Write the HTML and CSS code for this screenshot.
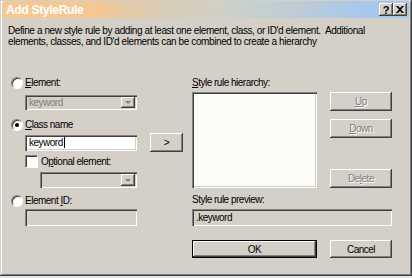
FILE: index.html
```html
<!DOCTYPE html>
<html lang="en">
<head>
    <meta charset="UTF-8">
    <title>Add StyleRule</title>
    <link rel="stylesheet" href="styles.css">
</head>
<body>

    <div class="window">
        <div class="titlebar">
            <span class="title">Add StyleRule</span>
            <div class="tb-btns">
                <span class="tb-btn">?</span>
                <span class="tb-btn">
                    <svg width="8" height="7" viewBox="0 0 8 7"><path d="M0 0h2l2 2 2-2h2L5 3.5 8 7H6L4 5 2 7H0l3-3.5z" fill="#000"/></svg>
                </span>
            </div>
        </div>

        <p class="intro">Define a new style rule by adding at least one element, class, or ID'd element.&nbsp; Additional elements, classes, and ID'd elements can be combined to create a hierarchy</p>

        <div class="main">
            <!-- 왼쪽: 선택자 입력 -->
            <div class="left">
                <div class="opt-row">
                    <span class="radio"></span>
                    <label><u>E</u>lement:</label>
                </div>
                <div class="select disabled select-el">
                    <span class="select-text">keyword</span>
                    <span class="drop"><i class="arrow"></i></span>
                </div>

                <div class="opt-row row-class">
                    <span class="radio checked"></span>
                    <label><u>C</u>lass name</label>
                </div>
                <div class="field field-class">keyword<span class="caret"></span></div>

                <div class="check-row">
                    <span class="checkbox"></span>
                    <label>O<u>p</u>tional element:</label>
                </div>
                <div class="select disabled select-opt">
                    <span class="select-text"></span>
                    <span class="drop"><i class="arrow"></i></span>
                </div>

                <div class="opt-row row-id">
                    <span class="radio"></span>
                    <label>Element <u>I</u>D:</label>
                </div>
                <div class="field disabled field-id"></div>
            </div>

            <div class="mid">
                <button class="btn btn-add">&gt;</button>
            </div>

            <!-- 오른쪽: 계층 / 미리보기 -->
            <div class="right">
                <label class="lbl-hier"><u>S</u>tyle rule hierarchy:</label>
                <div></div>
                <div class="listbox"></div>
                <div class="side-btns">
                    <button class="btn disabled"><u>U</u>p</button>
                    <button class="btn disabled btn-down"><u>D</u>own</button>
                    <button class="btn disabled btn-del">De<u>l</u>ete</button>
                </div>
                <label class="lbl-preview">Style rule preview:</label>
                <div></div>
                <div class="field disabled preview">.keyword</div>
                <button class="btn btn-default btn-ok">OK</button>
                <button class="btn btn-ok">Cancel</button>
            </div>
        </div>
    </div>

</body>
</html>
```

FILE: styles.css
```css
body {
    margin: 0;
    background: #e4e4e4;
    font-family: "Liberation Sans", Arial, sans-serif;
    font-size: 10px;
    letter-spacing: -0.5px;
    color: #000;
}
.window {
    width: 412px;
    height: 276px;
    box-sizing: border-box;
    background: #d4d0c8;
    padding: 1px 3px 0 3px;
    box-shadow: inset -1px -1px #404040, inset 1px 1px #d4d0c8,
                inset -2px -2px #808080, inset 2px 2px #fff;
}
.titlebar {
    height: 17px;
    display: flex;
    align-items: center;
    justify-content: space-between;
    padding: 0 2px 0 3px;
    background: linear-gradient(to right, #f6c892 0%, #f2c894 24%, #e4c9a6 30%,
                #d6cdb8 42%, #d2d0c4 52%, #c6d0cc 60%, #bccbd8 74%, #a8c8ec 88%, #a6c8f0 100%);
}
.title {
    color: #fff;
    font-weight: bold;
    font-size: 12px;
    letter-spacing: -0.3px;
}
.tb-btns {
    display: flex;
}
.tb-btn {
    width: 14px;
    height: 13px;
    display: flex;
    align-items: center;
    justify-content: center;
    background: #d4d0c8;
    font-weight: bold;
    font-size: 11px;
    letter-spacing: 0;
    box-shadow: inset -1px -1px #404040, inset 1px 1px #fff, inset -2px -2px #808080;
}
.intro {
    margin: 7px 0 0 5px;
    width: 390px;
    line-height: 11px;
    letter-spacing: -0.4px;
}
.main {
    display: flex;
    margin-top: 30px;
    padding-left: 8px;
}
label {
    display: block;
    line-height: 12px;
}

/* 왼쪽 영역 */
.left {
    width: 126px;
    display: flex;
    flex-direction: column;
}
.opt-row, .check-row {
    display: flex;
    align-items: center;
    gap: 2px;
    height: 12px;
}
.radio {
    width: 10px;
    height: 10px;
    border-radius: 50%;
    background: #fff;
    border: 1px solid;
    border-color: #808080 #fff #fff #808080;
    box-shadow: inset 1px 1px #404040;
    position: relative;
}
.radio.checked::after {
    content: "";
    position: absolute;
    left: 3px;
    top: 3px;
    width: 4px;
    height: 4px;
    border-radius: 50%;
    background: #000;
}
.row-class { margin-top: 9px; }
.row-id { margin-top: 7px; }
.check-row {
    margin: 4px 0 0 14px;
    height: 13px;
    gap: 3px;
}
.checkbox {
    width: 11px;
    height: 11px;
    background: #fff;
    border: 1px solid;
    border-color: #808080 #fff #fff #808080;
    box-shadow: inset 1px 1px #404040;
}
.select, .field {
    box-sizing: border-box;
    box-shadow: inset 1px 1px #808080, inset 2px 2px #404040,
                inset -1px -1px #fff, inset -2px -2px #d4d0c8;
    background: #fff;
}
.select {
    display: flex;
    align-items: center;
    justify-content: space-between;
    height: 15px;
    padding: 2px;
    margin-left: 14px;
}
.select.disabled, .field.disabled {
    background: #d4d0c8;
}
.select-el { margin-top: 6px; }
.select-opt { margin: 4px 0 0 29px; height: 16px; }
.select-text {
    color: #808080;
    padding-left: 2px;
}
.drop {
    width: 14px;
    height: 100%;
    display: flex;
    align-items: center;
    justify-content: center;
    background: #d4d0c8;
    box-shadow: inset -1px -1px #404040, inset 1px 1px #fff, inset -2px -2px #808080;
}
.arrow {
    width: 0;
    height: 0;
    border-left: 3px solid transparent;
    border-right: 3px solid transparent;
    border-top: 3px solid #808080;
}
.field {
    height: 16px;
    line-height: 16px;
    padding-left: 4px;
    margin-left: 14px;
}
.field-class { margin-top: 4px; }
.field-id { margin-top: 2px; height: 17px; }
.caret {
    display: inline-block;
    width: 1px;
    height: 11px;
    background: #000;
    vertical-align: -2px;
    margin-left: 1px;
}

/* 버튼 */
.btn {
    font-family: inherit;
    font-size: 10px;
    letter-spacing: -0.5px;
    background: #d4d0c8;
    border: none;
    padding: 0;
    height: 19px;
    color: #000;
    box-shadow: inset -1px -1px #404040, inset 1px 1px #fff, inset -2px -2px #808080;
}
.btn.disabled {
    color: #808080;
    text-shadow: 1px 1px #fff;
}
.btn-default {
    box-shadow: inset 0 0 0 1px #000, inset -2px -2px #404040,
                inset 2px 2px #fff, inset -3px -3px #808080;
}
.mid {
    width: 33px;
    margin-left: 13px;
}
.btn-add {
    width: 33px;
    margin-top: 56px;
}

/* 오른쪽 영역 */
.right {
    margin-left: 9px;
    display: grid;
    grid-template-columns: 125px 62px;
    column-gap: 13px;
    align-content: start;
}
.lbl-hier { height: 12px; }
.listbox {
    margin-top: 3px;
    height: 96px;
    box-sizing: border-box;
    background: #fcfcf8;
    box-shadow: inset 1px 1px #808080, inset 2px 2px #404040,
                inset -1px -1px #fff, inset -2px -2px #d4d0c8;
}
.side-btns {
    margin-top: 3px;
    display: flex;
    flex-direction: column;
}
.btn-down { margin-top: 8px; }
.btn-del { margin-top: auto; }
.lbl-preview { margin-top: 6px; }
.preview {
    grid-column: 1 / 3;
    margin: 3px 0 0 0;
    height: 17px;
    line-height: 17px;
}
.btn-ok {
    margin-top: 14px;
    height: 18px;
}
```
